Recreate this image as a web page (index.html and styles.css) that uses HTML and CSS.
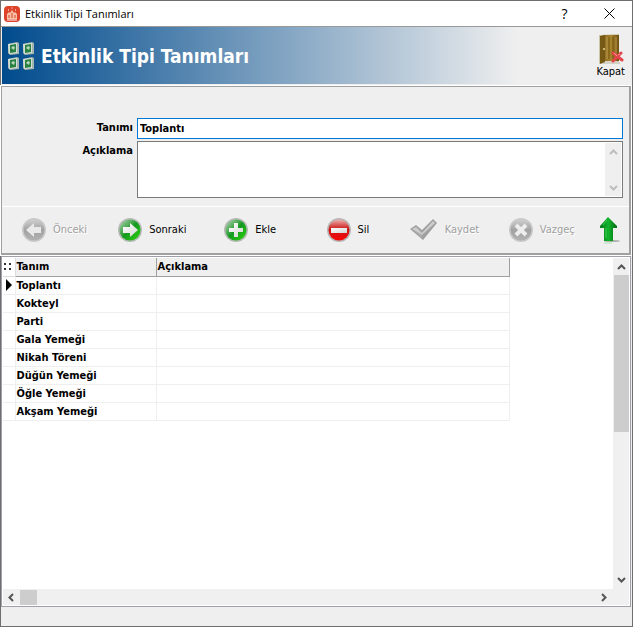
FILE: index.html
```html
<!DOCTYPE html>
<html lang="tr">

<head>
  <meta charset="UTF-8" />
  <title>Etkinlik Tipi Tanımları</title>
  <link rel="stylesheet" href="styles.css">
</head>

<body>
  <svg class="defs" width="0" height="0">
    <defs>
      <linearGradient id="green" x1="0" y1="0" x2="1" y2="1">
        <stop offset="0" stop-color="#b4d6b4" />
        <stop offset="0.3" stop-color="#5cb062" />
        <stop offset="0.5" stop-color="#149a20" />
        <stop offset="1" stop-color="#2ed60c" />
      </linearGradient>
      <linearGradient id="red" x1="0" y1="0" x2="0" y2="1">
        <stop offset="0" stop-color="#ecb4b0" />
        <stop offset="0.45" stop-color="#cc1818" />
        <stop offset="1" stop-color="#f80808" />
      </linearGradient>
      <linearGradient id="gray" x1="0" y1="0" x2="0" y2="1">
        <stop offset="0" stop-color="#cfcfcf" />
        <stop offset="0.5" stop-color="#a2a2a2" />
        <stop offset="1" stop-color="#b2b2b2" />
      </linearGradient>
      <linearGradient id="silver" x1="0" y1="0" x2="1" y2="1">
        <stop offset="0" stop-color="#ffffff" />
        <stop offset="1" stop-color="#d2d6d2" />
      </linearGradient>
      <linearGradient id="wood" x1="0" y1="0" x2="1" y2="0">
        <stop offset="0" stop-color="#8a6a24" />
        <stop offset="0.5" stop-color="#a9852f" />
        <stop offset="1" stop-color="#6d5010" />
      </linearGradient>
      <linearGradient id="arrow" x1="0" y1="0" x2="1" y2="0">
        <stop offset="0" stop-color="#0a7a1c" />
        <stop offset="0.5" stop-color="#12b32c" />
        <stop offset="1" stop-color="#046a12" />
      </linearGradient>
      <symbol id="cube" viewBox="0 0 11 13">
        <path d="M0 2L9 0l2 1v11l-9 1-2-2z" fill="#a3b5ac" />
        <path d="M0 2l9-1v10l-8 1z" fill="#d5ded8" />
        <path d="M2 3l6-1v8l-6 1z" fill="#28813f" />
        <path d="M3 6l2-2 2 1-1 3z" fill="#b5d5bd" />
      </symbol>
    </defs>
  </svg>

  <div class="window">
    <!-- title bar -->
    <div class="titlebar">
      <svg class="app-icon" width="16" height="16" viewBox="0 0 16 16">
        <rect width="16" height="16" rx="4" fill="#dc4328" />
        <path d="M3 13V8l2-2 1 1 2-3 2 3 1-1 2 2v5z" fill="#f6c3a8" />
        <path d="M5 9v3M8 7v5M11 9v3" stroke="#dc4328" />
        <path d="M4 4h1M7.500 2h1M11 4h1" stroke="#fff" />
        <path d="M3 14h10" stroke="#fff" />
      </svg>
      <span class="caption">Etkinlik Tipi Tanımları</span>
      <button class="win-btn" type="button" aria-label="Yardım">?</button>
      <button class="win-btn" type="button" aria-label="Pencereyi kapat">
        <svg width="11" height="11" viewBox="0 0 11 11"><path d="M.5.5l10 10M10.500.5l-10 10" stroke="#000" fill="none" /></svg>
      </button>
    </div>

    <!-- header -->
    <div class="header">
      <div class="cubes">
        <svg width="11" height="13"><use href="#cube" /></svg>
        <svg width="11" height="13"><use href="#cube" /></svg>
        <svg width="11" height="13"><use href="#cube" /></svg>
        <svg width="11" height="13"><use href="#cube" /></svg>
      </div>
      <h1>Etkinlik Tipi Tanımları</h1>
      <button class="close-btn" type="button">
        <svg width="26" height="32" viewBox="0 0 26 32">
          <path d="M2 29l3-1 17 1v2H4z" fill="#d3d0c6" />
          <path d="M1 2l20-1v28l-14-1-6 3z" fill="#cbc5a7" />
          <path d="M5 2h16v26H7z" fill="url(#wood)" />
          <path d="M2 3l5-1v27l-5 2z" fill="#765914" />
          <path d="M11 4v22M15 4v22" stroke="#75560f" />
          <path d="M9 4v22M18 4v20" stroke="#b8964a" />
          <circle cx="6" cy="16" r="1" fill="#e9d89a" />
          <path d="M15 20l9 7M23 20l-8 8" stroke="#e4454a" stroke-width="3" stroke-linecap="round" />
          <path d="M16 20l3 3M22 21l-2 1" stroke="#f79a9c" />
        </svg>
        <span>Kapat</span>
      </button>
    </div>

    <div class="panel">
      <!-- form -->
      <form class="form">
        <label for="tanimi">Tanımı</label>
        <input id="tanimi" type="text" value="Toplantı">
        <label for="aciklama">Açıklama</label>
        <div class="memo">
          <textarea id="aciklama"></textarea>
          <div class="memo-scroll">
            <svg width="9" height="6" viewBox="0 0 9 6"><path d="M1 5l3.500-3.500L8 5" /></svg>
            <svg width="9" height="6" viewBox="0 0 9 6"><path d="M1 1l3.500 3.500L8 1" /></svg>
          </div>
        </div>
      </form>

      <!-- navigation buttons -->
      <div class="toolbar">
        <button type="button" disabled>
          <svg width="24" height="24" viewBox="0 0 24 24">
            <circle cx="12" cy="12" r="12" fill="#c9c9c9" />
            <circle cx="12" cy="12" r="10.500" fill="url(#gray)" />
            <path d="M4 12l8-7v4h7v6h-7v4z" fill="#e9e9e9" />
          </svg>
          <span>Önceki</span>
        </button>
        <button type="button">
          <svg width="24" height="24" viewBox="0 0 24 24">
            <circle cx="12" cy="12" r="12" fill="#b5bab5" />
            <circle cx="12" cy="12" r="10.500" fill="url(#green)" />
            <path d="M20 12l-8-7v4H5v6h7v4z" fill="url(#silver)" />
          </svg>
          <span>Sonraki</span>
        </button>
        <button type="button">
          <svg width="24" height="24" viewBox="0 0 24 24">
            <circle cx="12" cy="12" r="12" fill="#b5bab5" />
            <circle cx="12" cy="12" r="10.500" fill="url(#green)" />
            <path d="M10 5h4v5h5v4h-5v5h-4v-5H5v-4h5z" fill="url(#silver)" />
          </svg>
          <span>Ekle</span>
        </button>
        <button type="button">
          <svg width="24" height="24" viewBox="0 0 24 24">
            <circle cx="12" cy="12" r="12" fill="#b9b5b5" />
            <circle cx="12" cy="12" r="10.500" fill="url(#red)" />
            <path d="M4 10h16v5H4z" fill="url(#silver)" />
          </svg>
          <span>Sil</span>
        </button>
        <button type="button" disabled>
          <svg width="28" height="24" viewBox="0 0 28 24">
            <path d="M0 11l6-4 6 5L23 1l4 4-14 17z" fill="#a0a0a0" />
            <path d="M2 11l4-2 6 6L23 3l2 2-13 12z" fill="#cdcdcd" />
            <path d="M2 11l10 6v3z" fill="#aeaeae" />
          </svg>
          <span>Kaydet</span>
        </button>
        <button type="button" disabled>
          <svg width="24" height="24" viewBox="0 0 24 24">
            <circle cx="12" cy="12" r="12" fill="#c9c9c9" />
            <circle cx="12" cy="12" r="10.500" fill="url(#gray)" />
            <path d="M7 7l10 10M17 7L7 17" stroke="#ededed" stroke-width="4" />
          </svg>
          <span>Vazgeç</span>
        </button>
        <button type="button" aria-label="Yukarı">
          <svg width="24" height="28" viewBox="0 0 24 28">
            <ellipse cx="14" cy="25" rx="8" ry="1" fill="#aab0aa" />
            <path d="M10 1l9 9v2h-4v13H6V12H2v-2z" fill="url(#arrow)" />
            <path d="M9 4L5 9M8 12v10" stroke="#3bd355" />
            <path d="M6 26h8v2H6z" fill="#cfe8d2" />
          </svg>
        </button>
      </div>
    </div>

    <!-- records -->
    <div class="grid">
      <div class="rows">
        <table>
          <thead>
            <tr>
              <th class="mark"><svg width="8" height="8" viewBox="0 0 8 8"><path d="M0 0h2v2H0zM5 0h2v2H5zM0 5h2v2H0zM5 5h2v2H5z" fill="#333" /></svg></th>
              <th>Tanım</th>
              <th>Açıklama</th>
            </tr>
          </thead>
          <tbody>
            <tr><td class="mark"><svg width="6" height="12" viewBox="0 0 6 12"><path d="M0 0l6 6-6 6z" /></svg></td><td>Toplantı</td><td></td></tr>
            <tr><td class="mark"></td><td>Kokteyl</td><td></td></tr>
            <tr><td class="mark"></td><td>Parti</td><td></td></tr>
            <tr><td class="mark"></td><td>Gala Yemeği</td><td></td></tr>
            <tr><td class="mark"></td><td>Nikah Töreni</td><td></td></tr>
            <tr><td class="mark"></td><td>Düğün Yemeği</td><td></td></tr>
            <tr><td class="mark"></td><td>Öğle Yemeği</td><td></td></tr>
            <tr><td class="mark"></td><td>Akşam Yemeği</td><td></td></tr>
          </tbody>
        </table>
      </div>
      <div class="vscroll">
        <svg width="9" height="6" viewBox="0 0 9 6"><path d="M1 5l3.500-3.500L8 5" /></svg>
        <div class="track"><div class="thumb"></div></div>
        <svg width="9" height="6" viewBox="0 0 9 6"><path d="M1 1l3.500 3.500L8 1" /></svg>
      </div>
      <div class="hscroll">
        <svg width="6" height="9" viewBox="0 0 6 9"><path d="M5 1L1.500 4.500 5 8" /></svg>
        <div class="track"><div class="thumb"></div></div>
        <svg width="6" height="9" viewBox="0 0 6 9"><path d="M1 1l3.500 3.500L1 8" /></svg>
      </div>
    </div>

    <div class="statusbar"></div>
  </div>
</body>

</html>
```
FILE: styles.css
```css
* {
  box-sizing: border-box;
  margin: 0;
  padding: 0;
}

body {
  font: 11px/14px "DejaVu Sans Condensed", "DejaVu Sans", sans-serif;
  color: #000;
}

button {
  border: 0;
  background: none;
  font: inherit;
  color: inherit;
}

svg {
  display: block;
  flex: none;
}

.defs {
  position: absolute;
}

.window {
  display: flex;
  flex-direction: column;
  min-height: 100vh;
  padding-right: 1px;
  border: 1px solid #6e6e6e;
  background: #efefef;
}

/* title bar */
.titlebar {
  display: flex;
  align-items: center;
  height: 26px;
  padding-left: 3px;
  margin-right: -1px;
  background: #fff;
  border-bottom: 1px solid #999;
}

.caption {
  flex: 1;
  margin-left: 5px;
  font: 11px/16px "Open Sans", sans-serif;
}

.win-btn {
  display: flex;
  align-items: center;
  justify-content: center;
  width: 45px;
  height: 24px;
  font: 14px/16px "Open Sans", sans-serif;
}

/* header */
.header {
  display: flex;
  align-items: center;
  height: 57px;
  padding: 0 6px;
  margin-left: 1px;
  background: linear-gradient(to right, #004b8d 0%, #efefef 82%);
}

.cubes {
  display: grid;
  grid-template-columns: 11px 11px;
  gap: 2px 4px;
}

h1 {
  flex: 1;
  margin-left: 7px;
  font-size: 19px;
  line-height: 24px;
  font-weight: bold;
  color: #fff;
}

.close-btn {
  display: flex;
  flex-direction: column;
  align-items: center;
}

/* form */
.panel {
  margin-top: 2px;
  border: 1px solid #a0a0a0;
  border-width: 1px 2px 2px 1px;
  outline: 1px solid #fff;
}

.form {
  display: grid;
  grid-template-columns: 131px 1fr;
  gap: 2px 4px;
  padding: 31px 6px 8px 0;
  font-weight: bold;
}

.form label {
  padding-top: 3px;
  text-align: right;
}

.form input {
  width: 100%;
  height: 21px;
  padding: 0 2px;
  border: 1px solid #0078d7;
  border-radius: 0;
  background: #fff;
  font: inherit;
  outline: none;
}

.memo {
  display: flex;
  height: 57px;
  padding: 1px;
  border: 1px solid #7a7a7a;
  background: #fff;
}

.memo textarea {
  flex: 1;
  border: 0;
  outline: none;
  resize: none;
  font: inherit;
}

.memo-scroll {
  display: flex;
  flex-direction: column;
  align-items: center;
  justify-content: space-between;
  width: 16px;
  padding: 6px 0 5px;
  background: #efefef;
}

.memo-scroll path {
  fill: none;
  stroke: #bdbdbd;
  stroke-width: 2;
}

/* toolbar */
.toolbar {
  display: grid;
  grid-template-columns: 96fr 106fr 102fr 83fr 99fr 89fr 29fr;
  height: 47px;
  padding: 0 2px 0 20px;
  border-top: 1px solid #fff;
}

.toolbar button {
  display: flex;
  align-items: center;
  gap: 7px;
}

.toolbar button:disabled {
  color: #a0a0a0;
  text-shadow: 1px 1px #fff;
}

/* records grid */
.grid {
  display: grid;
  flex: 1;
  grid-template-columns: 1fr 16px;
  grid-template-rows: 1fr 16px;
  margin-top: 1px;
  padding: 1px;
  border: 1px solid #a0a0a8;
  background: #fff;
}

table {
  width: 506px;
  border-collapse: collapse;
  table-layout: fixed;
  font-weight: bold;
}

th,
td {
  width: 353px;
  height: 18px;
  padding: 1px 1px 0;
  border: 1px solid #efefef;
  border-top: 0;
  text-align: left;
}

th {
  background: #efefef;
  border-color: #a0a0a0;
}

th:nth-child(2) {
  width: 141px;
}

th.mark,
td.mark {
  width: 12px;
  padding: 0 1px;
  border-left: 0;
}

th.mark {
  background: #fff;
  border-color: #dcdcdc;
}

td.mark svg {
  margin-left: 2px;
}

.vscroll,
.hscroll {
  display: flex;
  align-items: center;
  background: #f0f0f0;
}

.vscroll {
  flex-direction: column;
  padding: 6px 0;
}

.hscroll {
  grid-column: 1 / 3;
  padding: 0 22px 0 5px;
}

.vscroll path,
.hscroll path {
  fill: none;
  stroke: #555;
  stroke-width: 2;
}

.track {
  flex: 1;
}

.thumb {
  background: #cdcdcd;
}

.vscroll .track {
  width: 15px;
  margin: 5px 0;
}

.vscroll .thumb {
  height: 53%;
}

.hscroll .track {
  margin: 0 6px;
}

.hscroll .thumb {
  width: 17px;
  height: 15px;
}

.statusbar {
  height: 19px;
}
```
